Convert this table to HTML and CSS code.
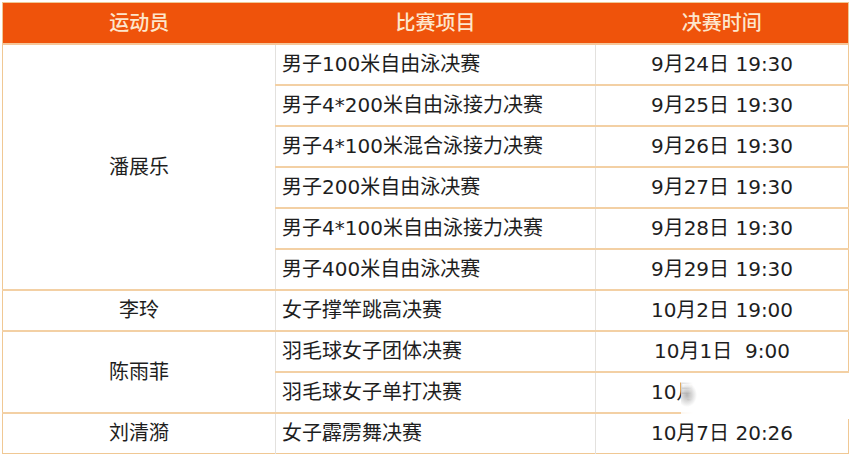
FILE: index.html
```html
<!DOCTYPE html>
<html lang="zh">
<head>
<meta charset="utf-8">
<link rel="stylesheet" href="styles.css">
</head>
<body>
<div class="wrap">
  <table class="schedule">
    <colgroup>
      <col class="c-athlete">
      <col class="c-event">
      <col class="c-time">
    </colgroup>
    <thead>
      <tr><th>运动员</th><th>比赛项目</th><th>决赛时间</th></tr>
    </thead>
    <tbody>
      <tr><td class="name" rowspan="6">潘展乐</td><td class="event">男子100米自由泳决赛</td><td class="time">9月24日 19:30</td></tr>
      <tr><td class="event">男子4*200米自由泳接力决赛</td><td class="time">9月25日 19:30</td></tr>
      <tr><td class="event">男子4*100米混合泳接力决赛</td><td class="time">9月26日 19:30</td></tr>
      <tr><td class="event">男子200米自由泳决赛</td><td class="time">9月27日 19:30</td></tr>
      <tr><td class="event">男子4*100米自由泳接力决赛</td><td class="time">9月28日 19:30</td></tr>
      <tr class="group-end"><td class="event">男子400米自由泳决赛</td><td class="time">9月29日 19:30</td></tr>
      <tr class="group-end"><td class="name">李玲</td><td class="event">女子撑竿跳高决赛</td><td class="time">10月2日 19:00</td></tr>
      <tr><td class="name" rowspan="2">陈雨菲</td><td class="event">羽毛球女子团体决赛</td><td class="time">10月1日  9:00</td></tr>
      <tr class="group-end"><td class="event">羽毛球女子单打决赛</td><td class="time hidden-time"><span class="partial">10月</span></td></tr>
      <tr><td class="name">刘清漪</td><td class="event">女子霹雳舞决赛</td><td class="time">10月7日 20:26</td></tr>
    </tbody>
  </table>
  <div class="smudge"></div>
</div>
</body>
</html>
```

FILE: styles.css
```css
html, body {
  margin: 0;
  padding: 0;
  background: #ffffff;
}

.wrap {
  position: relative;
  padding: 2px 4px 0 2px;
  font-family: "DejaVu Sans", "Noto Sans CJK SC", sans-serif;
}

.schedule {
  width: 846px;
  border-collapse: collapse;
  table-layout: fixed;
  border: 1px solid #f0c894;
}

.c-athlete { width: 273px; }
.c-event { width: 320px; }
.c-time { width: 253px; }

.schedule th {
  height: 38px;
  padding: 0 0 2px 0;
  background: #ef530b;
  color: #fde6cc;
  font-family: "Noto Sans CJK SC", sans-serif;
  font-size: 20px;
  font-weight: 500;
  line-height: 24px;
  text-align: center;
  border-bottom: 2px solid #f5c79a;
}

.schedule td {
  height: 38px;
  padding: 0 0 1px 0;
  font-size: 20px;
  line-height: 24px;
  color: #1e1e1e;
  border-top: 2px solid #f3d0a4;
  border-left: 1px solid #e3e1de;
  border-right: 1px solid #e3e1de;
  white-space: pre;
}

.schedule td.name {
  text-align: center;
  border-left: 1px solid #f0c894;
}

.schedule td.event {
  text-align: left;
  padding-left: 6px;
}

.schedule td.time {
  text-align: center;
  border-right: 1px solid #f0c894;
}

.hidden-time .partial {
  display: inline-block;
  width: 142px;
  text-align: left;
}

.smudge {
  position: absolute;
  left: 681px;
  top: 373px;
  width: 171px;
  height: 46px;
  background:
    radial-gradient(ellipse 10px 12px at 6px 22px, rgba(120,120,120,0.55), rgba(120,120,120,0) 100%),
    linear-gradient(to right, rgba(255,255,255,0.85), #ffffff 12px);
}
```
